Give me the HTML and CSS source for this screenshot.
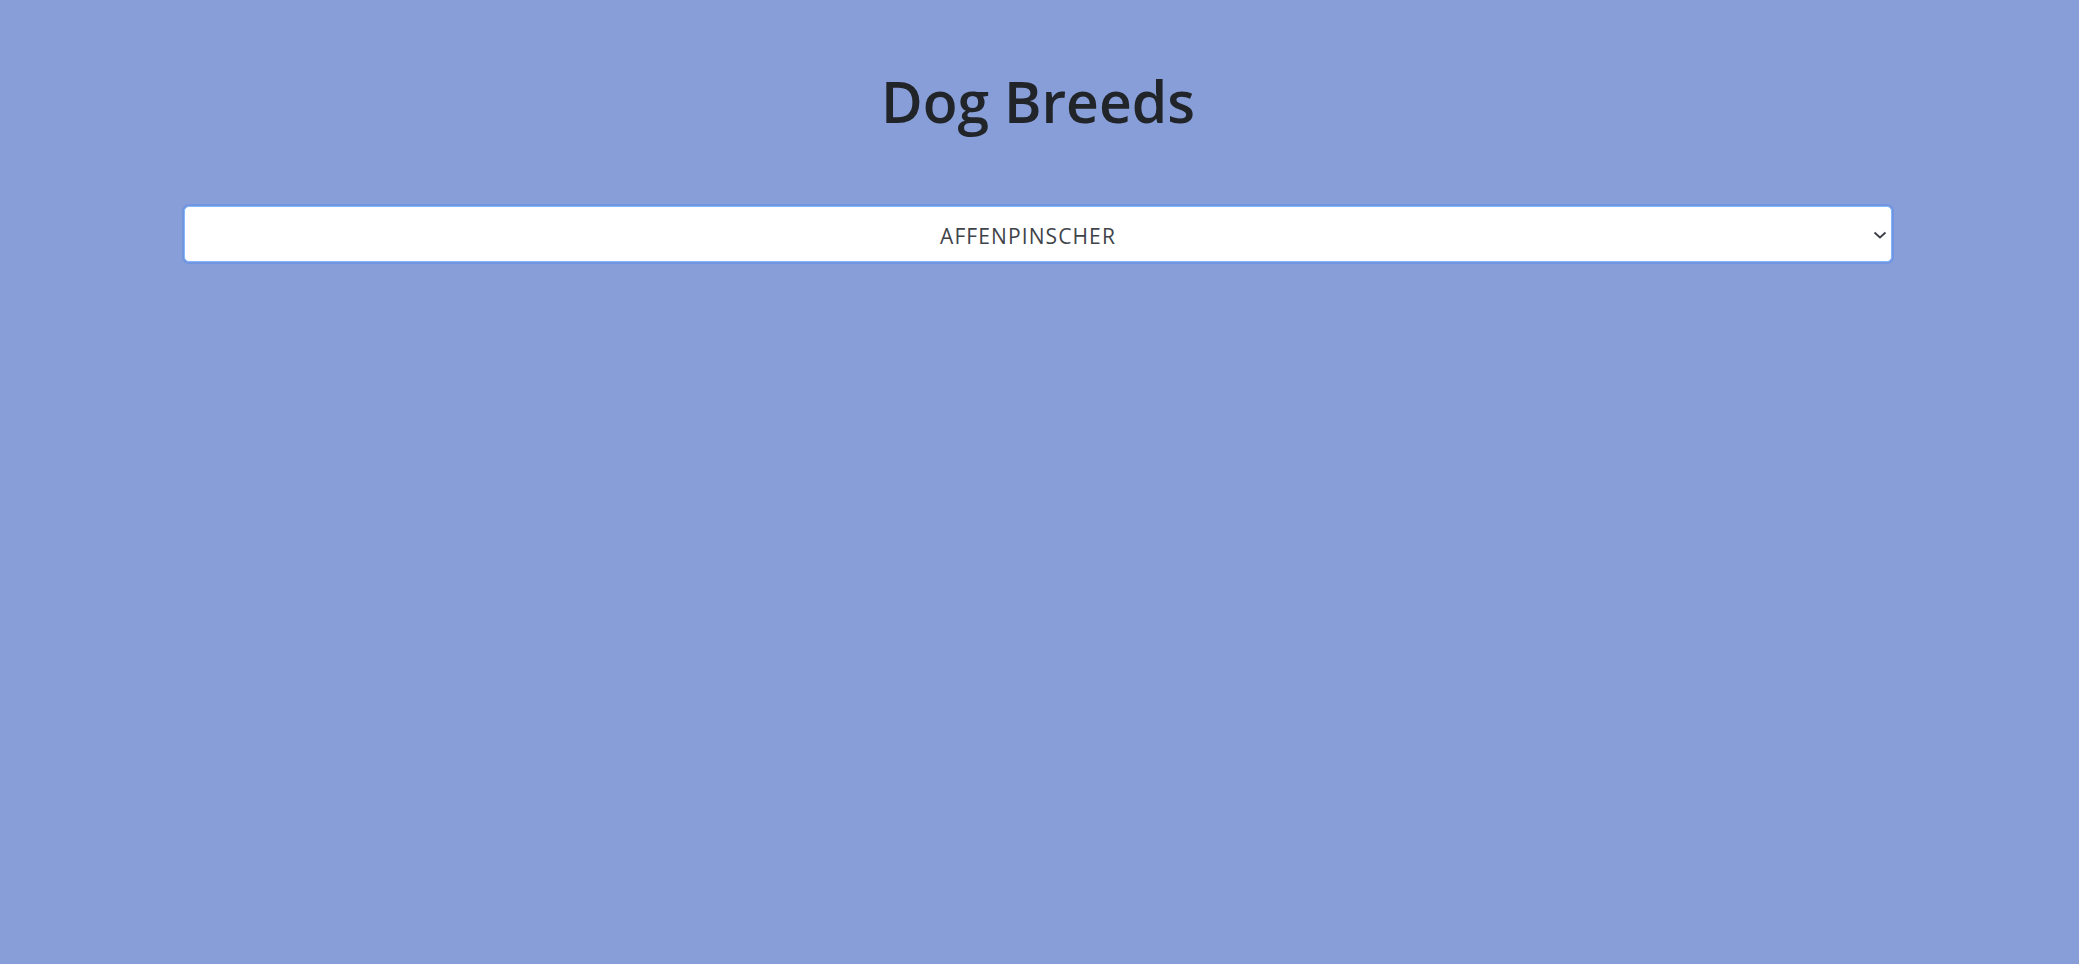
FILE: index.html
```html
<!DOCTYPE html>
<html lang="en">
<head>
<meta charset="utf-8">
<title>Dog Breeds</title>
<link rel="stylesheet" href="styles.css">
</head>
<body>
<main class="page">
  <h1 class="title">Dog Breeds</h1>
  <div class="select-wrap">
    <select class="breed-select">
      <option>AFFENPINSCHER</option>
      <option>AFRICAN</option>
      <option>AIREDALE</option>
    </select>
    <svg class="chevron" width="14" height="8" viewBox="0 0 14 8" aria-hidden="true"><path d="M1.5 1.5 L7 6.5 L12.5 1.5" fill="none" stroke="#3b3f45" stroke-width="1.8"/></svg>
  </div>
</main>
</body>
</html>
```

FILE: styles.css
```css
html, body {
  margin: 0;
  padding: 0;
  height: 100%;
}
body {
  background: #889ed8;
  font-family: "Open Sans", "Noto Sans", sans-serif;
  color: #212529;
}
.page {
  display: flex;
  flex-direction: column;
  align-items: stretch;
  padding: 0 187px 0 184px;
}
.title {
  margin: 63px 0 0;
  text-align: center;
  font-size: 57px;
  font-weight: 600;
  line-height: 76px;
  color: #212529;
}
.select-wrap {
  position: relative;
  margin-top: 67px;
}
.breed-select {
  display: block;
  width: 100%;
  height: 56px;
  box-sizing: border-box;
  appearance: none;
  -webkit-appearance: none;
  background: #fff;
  border: 1px solid #86b7fe;
  border-radius: 5px;
  box-shadow: 0 0 0 2px rgba(13, 110, 253, 0.18);
  outline: none;
  font-family: "Open Sans", "Noto Sans", sans-serif;
  font-size: 21px;
  letter-spacing: 1.1px;
  color: #3f444a;
  text-align: center;
  text-align-last: center;
  padding: 4px 44px 0 24px;
}
.chevron {
  position: absolute;
  right: 5px;
  top: 25px;
  pointer-events: none;
}
```
